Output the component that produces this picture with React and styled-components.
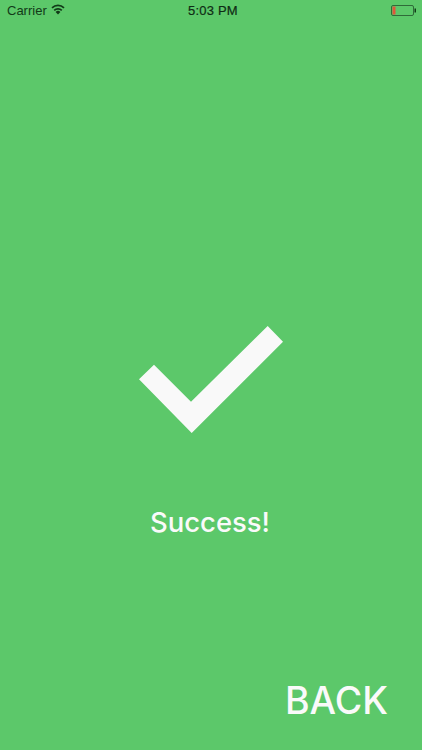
import React from 'react';
import styled, { createGlobalStyle } from 'styled-components';

const GlobalStyle = createGlobalStyle`
  html, body {
    margin: 0;
    padding: 0;
    background: #5cc86a;
  }
  * {
    box-sizing: border-box;
  }
`;

const Page = styled.div`
  width: 422px;
  height: 750px;
  overflow: hidden;
  display: flex;
  flex-direction: column;
  background: #5cc86a;
  font-family: Inter, "Liberation Sans", Arial, sans-serif;
`;

const StatusBar = styled.div`
  height: 21px;
  padding: 0 6px 0 7px;
  display: grid;
  grid-template-columns: 1fr auto 1fr;
  align-items: center;
  color: #123a18;
  font-family: "Liberation Sans", Arial, sans-serif;
  font-size: 13px;
`;

const Carrier = styled.div`
  display: flex;
  align-items: center;
  gap: 4px;
`;

const WifiSlot = styled.span`
  display: flex;
  margin-top: -3px;
`;

const Clock = styled.div`
  padding-left: 3px;
  font-size: 13px;
  letter-spacing: 0.2px;
  color: #0f2c14;
  -webkit-text-stroke: 0.2px #0f2c14;
`;

const BatteryWrap = styled.div`
  display: flex;
  justify-content: flex-end;
`;

const Main = styled.main`
  flex: 1;
  display: flex;
  flex-direction: column;
  align-items: center;
  padding-top: 305px;
`;

const Message = styled.div`
  margin-top: 70px;
  padding-right: 2px;
  color: #fafafa;
  font-size: 27.5px;
  font-weight: 500;
  line-height: 38px;
  letter-spacing: -0.05px;
`;

const Footer = styled.div`
  display: flex;
  justify-content: flex-end;
  padding: 0 34px 25px 0;
`;

const BackButton = styled.button`
  border: 0;
  padding: 0;
  background: none;
  color: #fafafa;
  font-family: inherit;
  font-size: 37.5px;
  font-weight: 500;
  line-height: 48px;
`;

const WifiIcon = () => (
  <svg width="14" height="11" viewBox="0 0 14 11">
    <path d="M7 10.5 4.6 8a3.4 3.4 0 0 1 4.8 0Z" fill="#123a18" />
    <path d="M3.2 6.4a5.4 5.4 0 0 1 7.6 0" fill="none" stroke="#123a18" strokeWidth="1.7" />
    <path d="M1 3.9a8.6 8.6 0 0 1 12 0" fill="none" stroke="#123a18" strokeWidth="1.7" />
  </svg>
);

const BatteryIcon = () => (
  <svg width="25" height="11" viewBox="0 0 25 11">
    <rect x="0.5" y="0.5" width="22" height="10" rx="1.5" fill="none" stroke="#2f6b39" />
    <rect x="1.5" y="1.5" width="3" height="8" fill="#e0563c" />
    <rect x="23.5" y="3.5" width="1.5" height="4" fill="#123a18" />
  </svg>
);

const CheckMark = () => (
  <svg width="144" height="107" viewBox="0 0 144 107">
    <polygon points="128.7,0 144,15.7 52.7,107 0,53.3 15,38.7 52,75.7" fill="#f9f9f9" />
  </svg>
);

const App = () => {
  return (
    <Page>
      <GlobalStyle />
      <StatusBar>
        <Carrier>
          Carrier
          <WifiSlot>
            <WifiIcon />
          </WifiSlot>
        </Carrier>
        <Clock>5:03 PM</Clock>
        <BatteryWrap>
          <BatteryIcon />
        </BatteryWrap>
      </StatusBar>
      <Main>
        <CheckMark />
        <Message>Success!</Message>
      </Main>
      <Footer>
        <BackButton>BACK</BackButton>
      </Footer>
    </Page>
  );
};

export default App;
